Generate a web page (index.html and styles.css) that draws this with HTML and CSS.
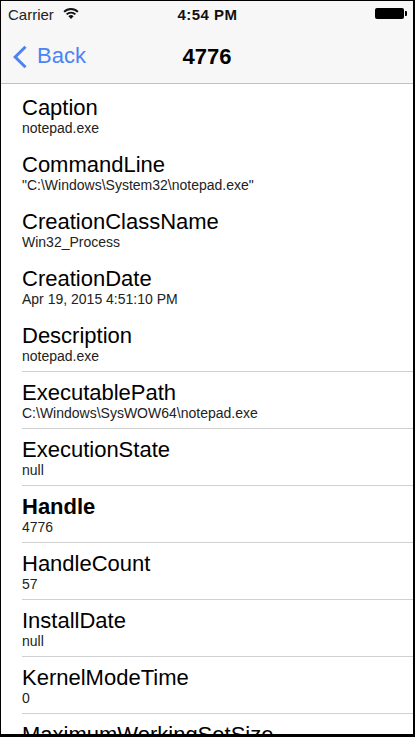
FILE: index.html
```html
<!DOCTYPE html>
<html lang="en">
<head>
    <meta charset="UTF-8">
    <meta name="viewport" content="width=device-width, initial-scale=1.0">
    <title>4776</title>
    <link rel="stylesheet" href="styles.css">
</head>
<body>
    <div class="screen">
        <!-- Status bar -->
        <div class="status-bar">
            <div class="carrier">
                Carrier
                <svg class="wifi" width="16" height="11" viewBox="0 0 16 11">
                    <path d="M8 11 L5.4 8.2 A3.7 3.7 0 0 1 10.6 8.2 Z" fill="#111"/>
                    <path d="M3.6 6.4 A6.3 6.3 0 0 1 12.4 6.4" fill="none" stroke="#111" stroke-width="1.9"/>
                    <path d="M1.1 3.9 A9.8 9.8 0 0 1 14.9 3.9" fill="none" stroke="#111" stroke-width="1.9"/>
                </svg>
            </div>
            <div class="clock">4:54 PM</div>
            <div class="battery">
                <span class="battery-body"></span>
                <span class="battery-tip"></span>
            </div>
        </div>

        <!-- Navigation bar -->
        <div class="nav-bar">
            <div class="back-button">
                <svg class="chevron" width="16" height="24" viewBox="0 0 16 24">
                    <path d="M13.5 1.8 L3.2 12 L13.5 22.2" fill="none" stroke="#4a84f4" stroke-width="3"/>
                </svg>
                <span>Back</span>
            </div>
            <div class="nav-title">4776</div>
            <div></div>
        </div>

        <!-- Property list -->
        <div class="table">
            <div class="row no-line">
                <div class="row-title">Caption</div>
                <div class="row-value">notepad.exe</div>
            </div>
            <div class="row no-line">
                <div class="row-title">CommandLine</div>
                <div class="row-value">"C:\Windows\System32\notepad.exe"</div>
            </div>
            <div class="row no-line">
                <div class="row-title">CreationClassName</div>
                <div class="row-value">Win32_Process</div>
            </div>
            <div class="row no-line">
                <div class="row-title">CreationDate</div>
                <div class="row-value">Apr 19, 2015 4:51:10 PM</div>
            </div>
            <div class="row">
                <div class="row-title">Description</div>
                <div class="row-value">notepad.exe</div>
            </div>
            <div class="row">
                <div class="row-title">ExecutablePath</div>
                <div class="row-value">C:\Windows\SysWOW64\notepad.exe</div>
            </div>
            <div class="row">
                <div class="row-title">ExecutionState</div>
                <div class="row-value">null</div>
            </div>
            <div class="row">
                <div class="row-title key">Handle</div>
                <div class="row-value">4776</div>
            </div>
            <div class="row">
                <div class="row-title">HandleCount</div>
                <div class="row-value">57</div>
            </div>
            <div class="row">
                <div class="row-title">InstallDate</div>
                <div class="row-value">null</div>
            </div>
            <div class="row">
                <div class="row-title">KernelModeTime</div>
                <div class="row-value">0</div>
            </div>
            <div class="row">
                <div class="row-title">MaximumWorkingSetSize</div>
            </div>
        </div>
    </div>
</body>
</html>
```

FILE: styles.css
```css
html, body {
    margin: 0;
    height: 100%;
    background-color: #000;
    overflow: hidden;
}
body {
    font-family: 'Liberation Sans', Arial, sans-serif;
}
/* Phone screen inside the black frame */
.screen {
    margin: 1px 2px 0 1px;
    height: 733px;
    background-color: #fff;
    overflow: hidden;
}

/* Status bar */
.status-bar {
    height: 26px;
    background-color: #f7f7f7;
    display: grid;
    grid-template-columns: 1fr auto 1fr;
    align-items: center;
    padding: 0 6px 0 7px;
    color: #222;
}
.carrier {
    font-size: 15px;
    display: flex;
    align-items: center;
    gap: 9px;
}
.wifi {
    margin-top: -1px;
}
.clock {
    font-size: 15px;
    font-weight: bold;
    letter-spacing: 0.5px;
    color: #111;
}
.battery {
    display: flex;
    align-items: center;
    justify-content: flex-end;
    margin-top: -1px;
}
.battery-body {
    width: 29px;
    height: 11px;
    background-color: #000;
    border-radius: 2px;
}
.battery-tip {
    width: 2px;
    height: 5px;
    margin-left: 1px;
    background-color: #000;
    border-radius: 0 1px 1px 0;
}

/* Navigation bar */
.nav-bar {
    height: 56px;
    background-color: #f7f7f7;
    border-bottom: 1px solid #c2c2c2;
    display: grid;
    grid-template-columns: 1fr auto 1fr;
    align-items: center;
}
.back-button {
    display: flex;
    align-items: center;
    color: #4a84f4;
    font-size: 22px;
    padding-left: 11px;
}
.chevron {
    margin-top: 3px;
    margin-right: 9px;
}
.back-button span {
    margin-top: 1px;
}
.nav-title {
    font-size: 22px;
    font-weight: bold;
    color: #000;
    padding-top: 3px;
}

/* Property rows */
.table {
    padding-top: 3px;
}
.row {
    margin-left: 21px;
    height: 57px;
    padding-top: 8px;
    box-sizing: border-box;
    border-bottom: 1px solid #d0d0d0;
}
.row.no-line {
    border-bottom-color: transparent;
}
.row-title {
    font-size: 22px;
    line-height: 25px;
    color: #000;
}
.row-title.key {
    font-weight: bold;
}
.row-value {
    font-size: 14px;
    line-height: 17px;
    color: #222;
}
```
